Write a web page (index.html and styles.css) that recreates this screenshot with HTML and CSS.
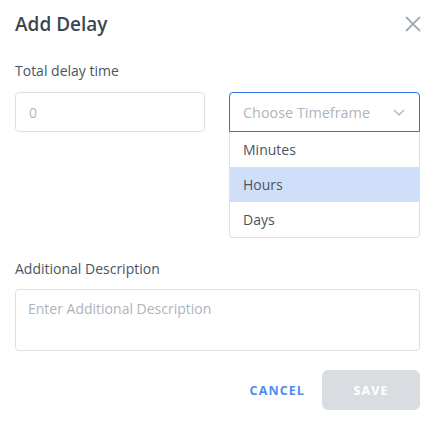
FILE: index.html
```html
<!DOCTYPE html>
<html>
<head>
<meta charset="utf-8">
<link rel="stylesheet" href="styles.css">
</head>
<body>
<div class="dialog">
  <div class="header">
    <h1 class="title">Add Delay</h1>
    <svg class="close" width="16" height="16" viewBox="0 0 16 16"><path d="M1.5 1.5 L14.5 14.5 M14.5 1.5 L1.5 14.5" stroke="#a3abb5" stroke-width="1.8" fill="none" stroke-linecap="round"/></svg>
  </div>
  <div class="label">Total delay time</div>
  <div class="row">
    <div class="input">0</div>
    <div class="select-wrap">
      <div class="select">
        <span>Choose Timeframe</span>
        <svg class="chev" width="12" height="7" viewBox="0 0 12 7"><path d="M1 1 L6 6 L11 1" stroke="#a3adb9" stroke-width="1.2" fill="none"/></svg>
      </div>
      <div class="menu">
        <div class="item">Minutes</div>
        <div class="item active">Hours</div>
        <div class="item">Days</div>
      </div>
    </div>
  </div>
  <div class="label label2">Additional Description</div>
  <div class="textarea">Enter Additional Description</div>
  <div class="actions">
    <span class="cancel">CANCEL</span>
    <span class="save">SAVE</span>
  </div>
</div>
</body>
</html>
```
FILE: styles.css
```css
* { box-sizing: border-box; }
html, body { margin: 0; padding: 0; background: #fff; }
body { font-family: "Open Sans", "Liberation Sans", sans-serif; color: #48525e; }
.dialog { padding: 12px 14px 0 15px; width: 434px; }
.header { display: flex; justify-content: space-between; align-items: center; height: 24px; }
.title { margin: 0; font-size: 19px; font-weight: 600; color: #3c4652; letter-spacing: 0; }
.close { margin-right: -1px; }
.label { margin-top: 26px; font-size: 14px; color: #4a5460; line-height: 18px; }
.row { display: flex; justify-content: space-between; margin-top: 12px; height: 40px; }
.input { width: 190px; height: 40px; border: 1px solid #dde1e6; border-radius: 4px; padding: 0 13px; display: flex; align-items: center; font-size: 14px; color: #b3b9c1; }
.select-wrap { position: relative; width: 191px; }
.select { height: 40px; border: 1px solid #2d6fe6; border-radius: 4px 4px 0 0; display: flex; align-items: center; justify-content: space-between; padding: 0 14px 0 13px; font-size: 14.4px; color: #adb4bd; }
.menu { position: absolute; top: 40px; left: 0; right: 0; border: 1px solid #dde1e6; border-top: none; border-radius: 0 0 4px 4px; background: #fff; }
.item { height: 35px; display: flex; align-items: center; padding-left: 13px; font-size: 14px; color: #4a5460; }
.item.active { background: #d0dff9; }
.label2 { margin-top: 128px; }
.textarea { margin-top: 11px; height: 62px; border: 1px solid #dde1e6; border-radius: 4px; padding: 9px 12px; font-size: 14px; color: #adb4bd; }
.actions { display: flex; justify-content: flex-end; align-items: center; margin-top: 19px; gap: 17px; }
.cancel { font-size: 12.5px; font-weight: 700; letter-spacing: 1.1px; color: #4d8def; }
.save { width: 98px; height: 40px; border-radius: 6px; background: #d9dde2; color: #fff; font-size: 12.5px; font-weight: 700; letter-spacing: 1.1px; display: flex; align-items: center; justify-content: center; }
```
